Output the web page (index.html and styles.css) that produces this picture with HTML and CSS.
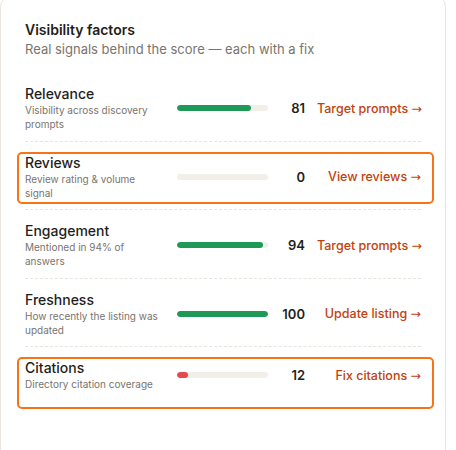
FILE: index.html
```html
<!DOCTYPE html>
<html>
<head>
    <meta charset="utf-8">
    <title> Visibility factors </title>

    <!-- Styling -->
    <link rel="stylesheet" href="styles.css">
</head>
<body>
    <div class="card">
        <h2> Visibility factors </h2>
        <p class="sub"> Real signals behind the score — each with a fix </p>

        <div class="factors">

            <!-- Relevance -->
            <div class="factor">
                <div class="info">
                    <div class="name">Relevance</div>
                    <div class="desc">Visibility across discovery prompts</div>
                </div>
                <div class="bar"><span class="fill good" style="width: 81%"></span></div>
                <div class="score">81</div>
                <a class="fix" href="#">Target prompts <span class="arrow">→</span></a>
            </div>

            <!-- Reviews -->
            <div class="factor flagged">
                <div class="info">
                    <div class="name">Reviews</div>
                    <div class="desc">Review rating &amp; volume signal</div>
                </div>
                <div class="bar"><span class="fill good" style="width: 0%"></span></div>
                <div class="score">0</div>
                <a class="fix" href="#">View reviews <span class="arrow">→</span></a>
            </div>

            <!-- Engagement -->
            <div class="factor">
                <div class="info">
                    <div class="name">Engagement</div>
                    <div class="desc">Mentioned in 94% of answers</div>
                </div>
                <div class="bar"><span class="fill good" style="width: 94%"></span></div>
                <div class="score">94</div>
                <a class="fix" href="#">Target prompts <span class="arrow">→</span></a>
            </div>

            <!-- Freshness -->
            <div class="factor">
                <div class="info">
                    <div class="name">Freshness</div>
                    <div class="desc">How recently the listing was updated</div>
                </div>
                <div class="bar"><span class="fill good" style="width: 100%"></span></div>
                <div class="score">100</div>
                <a class="fix" href="#">Update listing <span class="arrow">→</span></a>
            </div>

            <!-- Citations -->
            <div class="factor flagged">
                <div class="info">
                    <div class="name">Citations</div>
                    <div class="desc">Directory citation coverage</div>
                </div>
                <div class="bar"><span class="fill bad" style="width: 12%"></span></div>
                <div class="score">12</div>
                <a class="fix" href="#">Fix citations <span class="arrow">→</span></a>
            </div>

        </div>
    </div>
</body>
</html>
```

FILE: styles.css
```css
* {
    box-sizing: border-box;
}

:root {
    --ink:       #1f1e1c;
    --muted:     #7a746d;
    --line:      #e9e5de;
    --track:     #f2efe9;
    --green:     #1e9a56;
    --red:       #e5484d;
    --rust:      #c2410c;
    --flag:      #f97316;
}

body {
    margin: 0;
    font-family: Inter, "Noto Sans", sans-serif;
    color: var( --ink );
    background-color: #fff;
}

.card {
    width: 446px;
    margin-top: -5px;
    min-height: 470px;
    padding: 24px;

    background-color: #fff;
    border: 1px solid var( --line );
    border-radius: 12px;
}

h2 {
    margin: 0;
    font-size: 14px;
    font-weight: 600;
    line-height: 20px;
}

.sub {
    margin: 0;
    font-size: 13px;
    line-height: 18px;
    color: var( --muted );
}

.factors {
    margin-top: 15px;
}

.factor {
    position: relative;
    display: grid;
    grid-template-columns: 140px 91px 1fr 104px;
    column-gap: 12px;
    align-items: center;

    padding: 12px 0 9.5px;
    border-bottom: 1px dashed var( --line );
}

.factor:last-child {
    border-bottom: none;
}

.flagged::after {
    content: "";
    position: absolute;
    top: 10px;
    left: -8px;
    right: -13px;
    height: 48px;

    border: 2px solid var( --flag );
    border-radius: 5px;
    pointer-events: none;
}

.name {
    font-size: 14px;
    font-weight: 500;
    line-height: 18px;
}

.desc {
    font-size: 10px;
    line-height: 14px;
    color: var( --muted );
}

.bar {
    height: 6px;
    border-radius: 3px;
    background-color: var( --track );
    overflow: hidden;
}

.fill {
    display: block;
    height: 100%;
    border-radius: 3px;
}

.good {
    background-color: var( --green );
}

.bad {
    background-color: var( --red );
}

.score {
    text-align: right;
    font-size: 13px;
    font-weight: 600;
}

.fix {
    text-align: right;
    font-size: 12.5px;
    font-weight: 500;
    color: var( --rust );
    text-decoration: none;
    white-space: nowrap;
}

.arrow {
    font-family: "DejaVu Sans", sans-serif;
    font-weight: normal;
}
```
